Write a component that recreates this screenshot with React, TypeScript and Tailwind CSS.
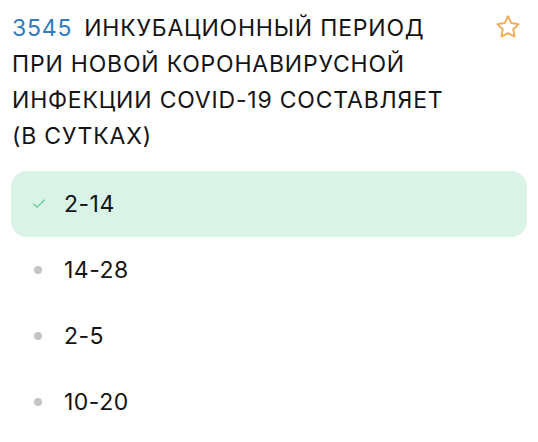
import { Check } from 'lucide-react';

const answers = [
  { label: '2-14', correct: true },
  { label: '14-28', correct: false },
  { label: '2-5', correct: false },
  { label: '10-20', correct: false },
];

function StarIcon() {
  return (
    <svg width="28" height="28" viewBox="0 0 24 24" fill="none" stroke="#f6ab55" strokeWidth="1.6" strokeLinejoin="round">
      <path d="M12 2.8l2.8 5.8 6.3.9-4.6 4.4 1.1 6.3L12 17.2l-5.6 3 1.1-6.3-4.6-4.4 6.3-.9z" />
    </svg>
  );
}

export default function App() {
  return (
    <div className="min-h-screen bg-white px-[11px] pt-[10px] font-['Inter',sans-serif] text-[#141414]">
      <div className="flex items-start justify-between gap-4">
        <h1 className="pl-px text-[23px] leading-[36px] tracking-[0.8px]">
          <span className="mr-[12px] text-[#2f7cc0]">3545</span>
          ИНКУБАЦИОННЫЙ ПЕРИОД
          <br />
          ПРИ НОВОЙ КОРОНАВИРУСНОЙ
          <br />
          ИНФЕКЦИИ COVID-19 СОСТАВЛЯЕТ
          <br />
          (В СУТКАХ)
        </h1>
        <div className="mr-[5px] mt-[3px] shrink-0">
          <StarIcon />
        </div>
      </div>

      <ul className="mt-[17px] flex flex-col">
        {answers.map((a) => (
          <li
            key={a.label}
            className={`flex h-[66px] items-center rounded-[16px] pl-[20px] text-[23px] tracking-[0.5px] ${a.correct ? 'bg-[#d9f3e6]' : ''}`}
          >
            <span className="flex w-[33px] items-center">
              {a.correct ? (
                <Check size={16} strokeWidth={1.6} className="text-[#5cc88f]" />
              ) : (
                <span className="ml-[3px] h-[8px] w-[8px] rounded-full bg-[#c4c4c4]" />
              )}
            </span>
            {a.label}
          </li>
        ))}
      </ul>
    </div>
  );
}
